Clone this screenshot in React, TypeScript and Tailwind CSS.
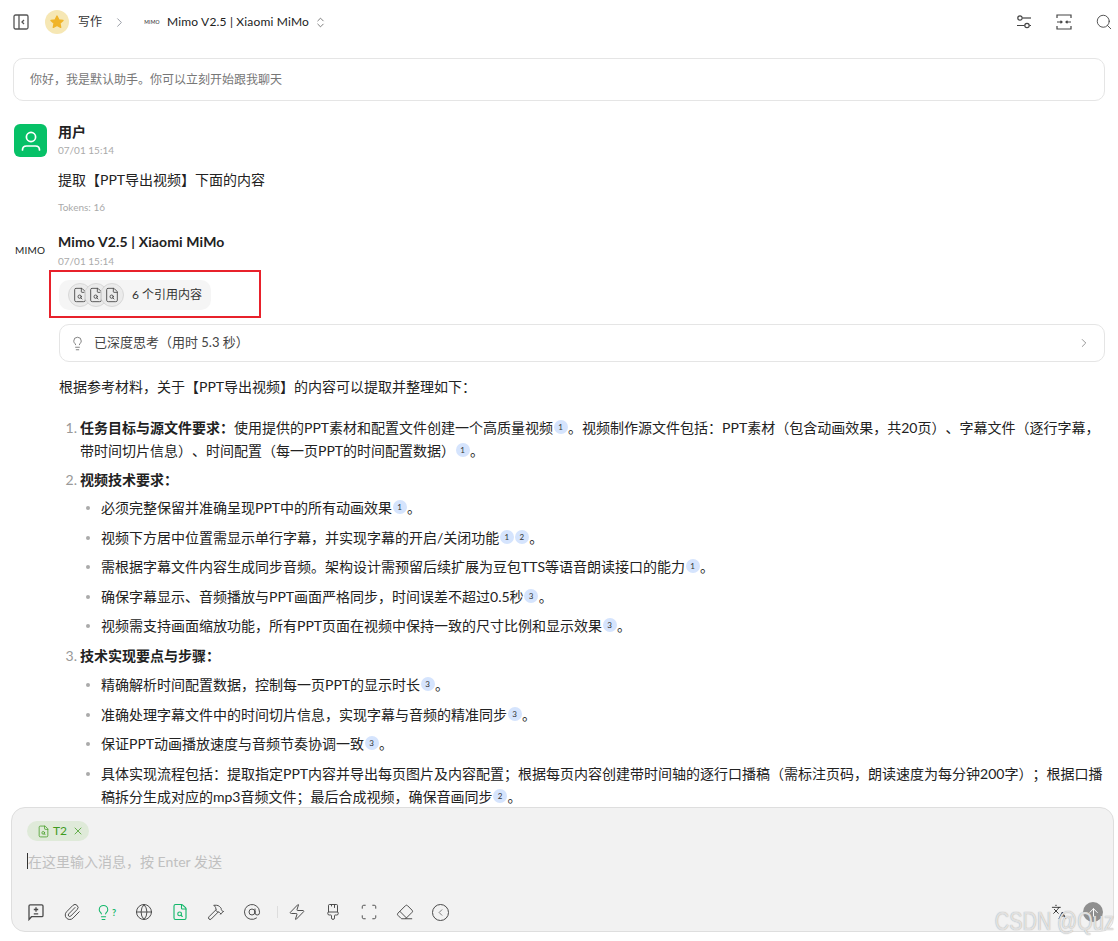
import React from "react";
import {
  ChevronRight, ChevronsUpDown, Search, Lightbulb, Paperclip, Globe, FileSearch, Hammer, AtSign, Zap,
  PaintbrushVertical, Scan, Eraser, ChevronLeft, Languages, ArrowUp, X,
} from "lucide-react";

const font = { fontFamily: 'Lato, "Noto Sans CJK SC", sans-serif' };

function Cite({ n }: { n: number }) {
  return (
    <span className="inline-flex items-center justify-center w-[14px] h-[14px] rounded-full bg-[#d5e4fd] text-[8px] leading-none text-[#333] align-[3px] mx-[0.5px]">
      {n}
    </span>
  );
}

function Num({ n, children }: { n: number; children: React.ReactNode }) {
  return (
    <div className="flex">
      <span className="w-[21px] shrink-0 text-right pr-[3px] text-[#999]">{n}.</span>
      <div className="flex-1 min-w-0">{children}</div>
    </div>
  );
}

function Bullet({ children, first }: { children: React.ReactNode; first?: boolean }) {
  return (
    <div className={first ? "flex pl-[21px] mt-[5px]" : "flex pl-[21px] mt-[6.5px]"}>
      <span className="w-[21px] shrink-0 flex pt-[10px]">
        <span className="w-[4px] h-[4px] rounded-full bg-[#aaa] ml-[6px]" />
      </span>
      <div className="flex-1 min-w-0">{children}</div>
    </div>
  );
}

function Tool({ children }: { children: React.ReactNode }) {
  return <span className="w-[18px] h-[18px] flex items-center justify-center text-[#4a4a4a]">{children}</span>;
}

function DocBadge() {
  return (
    <span className="w-[24px] h-[24px] -mr-[8px] rounded-full bg-[#e8e8e8]/80 border border-[#d8d8d8] flex items-center justify-center text-[#444]">
      <FileSearch size={16} strokeWidth={1.3} />
    </span>
  );
}

export default function App() {
  return (
    <div className="relative w-[1118px] h-[941px] overflow-hidden bg-white flex flex-col text-[#222] [text-spacing-trim:space-all]" style={font}>
      <header className="h-[44px] shrink-0 flex items-center pl-[13px] pr-[5px]">
        <svg width="16" height="16" viewBox="0 0 16 16" fill="none" stroke="#555" strokeWidth="1.3">
          <rect x="1" y="1" width="14" height="14" rx="1.5" />
          <path d="M6 1v14" />
          <path d="M11 6l-2 2 2 2" />
        </svg>
        <span className="ml-[16px] w-[24px] h-[24px] rounded-full bg-[#f6e7b4] flex items-center justify-center">
          <svg width="16" height="16" viewBox="0 0 24 24" fill="#f0b429" stroke="#f0b429" strokeWidth="2" strokeLinejoin="round">
            <path d="M12 3l2.7 5.8 6.3.8-4.6 4.3 1.2 6.2L12 17l-5.6 3.1 1.2-6.2L3 9.6l6.3-.8z" />
          </svg>
        </span>
        <span className="ml-[9px] text-[12px] text-[#333] leading-none">写作</span>
        <ChevronRight size={15} strokeWidth={1.4} className="ml-[10px] text-[#8a8f99]" />
        <span className="ml-[17px] w-[16px] text-[5px] leading-none tracking-[0.2px] text-[#222] text-center">MIMO</span>
        <span className="ml-[7px] text-[12px] tracking-[0.17px] text-[#222] leading-none">Mimo V2.5 | Xiaomi MiMo</span>
        <ChevronsUpDown size={13} strokeWidth={1.4} className="ml-[5px] text-[#555]" />
        <div className="ml-auto flex items-center gap-[22px] text-[#444]">
          <svg width="18" height="18" viewBox="0 0 18 18" fill="none" stroke="#444" strokeWidth="1.2">
            <circle cx="5" cy="5" r="2.2" />
            <path d="M7.5 5H16" />
            <circle cx="12" cy="12.5" r="2.2" />
            <path d="M2 12.5h7.5M14.5 12.5H16" />
          </svg>
          <svg width="18" height="18" viewBox="0 0 18 18" fill="none" stroke="#444" strokeWidth="1.2">
            <path d="M2 5V2h14v3M2 13v3h14v-3" />
            <path d="M2 9h5M5.5 7.8 7 9l-1.5 1.2M16 9h-5M12.5 7.8 11 9l1.5 1.2" />
          </svg>
          <Search size={18} strokeWidth={1.2} />
        </div>
      </header>

      <main className="flex-1 min-h-0 overflow-hidden pl-[13px] pr-[13px]">
        <div className="mt-[14px] h-[43px] border border-[#e5e5e5] rounded-[10px] flex items-center px-[16px] text-[12px] text-[#777]">
          你好，我是默认助手。你可以立刻开始跟我聊天
        </div>

        <section className="mt-[23px] flex">
          <span className="w-[33px] h-[33px] ml-[1px] rounded-[6px] bg-[#06c167] flex items-center justify-center">
            <svg width="24" height="24" viewBox="0 0 24 24" fill="none" stroke="#fff" strokeWidth="1.7" strokeLinecap="round">
              <circle cx="12" cy="8" r="4.6" />
              <path d="M3.5 21c0-2.4 1.6-4 4-4h9c2.4 0 4 1.6 4 4" />
            </svg>
          </span>
          <div className="ml-[11px]">
            <div className="text-[14px] font-bold leading-[16px]">用户</div>
            <div className="text-[10px] text-[#aaa] leading-[12px] mt-[4px]">07/01 15:14</div>
            <div className="text-[14px] leading-[20px] mt-[14px]">提取【PPT导出视频】下面的内容</div>
            <div className="text-[10px] text-[#aaa] leading-[12px] mt-[11px]">Tokens: 16</div>
          </div>
        </section>

        <section className="mt-[20px] flex">
          <span className="w-[32px] h-[34px] ml-[1px] flex items-center justify-center text-[10px] tracking-[0.2px] text-[#222]">MIMO</span>
          <div className="ml-[13px] flex-1 min-w-0">
            <div className="-ml-[1px] text-[14px] font-bold tracking-[0.13px] leading-[18px]">Mimo V2.5 | Xiaomi MiMo</div>
            <div className="-ml-[1px] text-[10px] text-[#aaa] leading-[12px] mt-[4px]">07/01 15:14</div>
            <div className="mt-[13px] flex h-[30px] w-[152px] rounded-[10px] bg-[#f5f5f5] items-center pl-[9px]">
              <DocBadge />
              <DocBadge />
              <DocBadge />
              <span className="ml-[16px] text-[12px] text-[#333]">6 个引用内容</span>
            </div>
            <div className="mt-[14px] h-[38px] border border-[#e5e5e5] rounded-[10px] flex items-center pl-[10px] pr-[13px] text-[13px] text-[#444]">
              <Lightbulb size={15} strokeWidth={1.3} className="text-[#666]" />
              <span className="ml-[9px]">已深度思考（用时 5.3 秒）</span>
              <ChevronRight size={14} strokeWidth={1.3} className="ml-auto text-[#777]" />
            </div>
            <p className="mt-[15px] text-[14px] leading-[20px]">根据参考材料，关于【PPT导出视频】的内容可以提取并整理如下：</p>

            <div className="mt-[19px] text-[14px] leading-[23px]">
              <Num n={1}>
                <b>任务目标与源文件要求：</b>使用提供的PPT素材和配置文件创建一个高质量视频<Cite n={1} />。视频制作源文件包括：PPT素材（包含动画效果，共20页）、字幕文件（逐行字幕，带时间切片信息）、时间配置（每一页PPT的时间配置数据）<Cite n={1} />。
              </Num>
              <div className="mt-[6px]">
                <Num n={2}><b>视频技术要求：</b></Num>
              </div>
              <Bullet first>必须完整保留并准确呈现PPT中的所有动画效果<Cite n={1} />。</Bullet>
              <Bullet>视频下方居中位置需显示单行字幕，并实现字幕的开启/关闭功能<Cite n={1} /><Cite n={2} />。</Bullet>
              <Bullet>需根据字幕文件内容生成同步音频。架构设计需预留后续扩展为豆包TTS等语音朗读接口的能力<Cite n={1} />。</Bullet>
              <Bullet>确保字幕显示、音频播放与PPT画面严格同步，时间误差不超过0.5秒<Cite n={3} />。</Bullet>
              <Bullet>视频需支持画面缩放功能，所有PPT页面在视频中保持一致的尺寸比例和显示效果<Cite n={3} />。</Bullet>
              <div className="mt-[6.5px]">
                <Num n={3}><b>技术实现要点与步骤：</b></Num>
              </div>
              <Bullet>精确解析时间配置数据，控制每一页PPT的显示时长<Cite n={3} />。</Bullet>
              <Bullet>准确处理字幕文件中的时间切片信息，实现字幕与音频的精准同步<Cite n={3} />。</Bullet>
              <Bullet>保证PPT动画播放速度与音频节奏协调一致<Cite n={3} />。</Bullet>
              <Bullet>具体实现流程包括：提取指定PPT内容并导出每页图片及内容配置；根据每页内容创建带时间轴的逐行口播稿（需标注页码，朗读速度为每分钟200字）；根据口播稿拆分生成对应的mp3音频文件；最后合成视频，确保音画同步<Cite n={2} />。</Bullet>
            </div>
          </div>
        </section>
      </main>

      <footer className="shrink-0 ml-[11px] mr-[4px] mb-[9px] h-[125px] rounded-[14px] border border-[#dedede] bg-[#f2f2f2] flex flex-col px-[15px] pt-[13px] pb-[9px]">
        <span className="self-start h-[20px] pl-[10px] pr-[5px] rounded-full bg-[#dfead9] flex items-center text-[#3f9b1f] text-[12px] gap-[3px]">
          <FileSearch size={13} strokeWidth={1.4} />
          T2
          <X size={12} strokeWidth={1.5} className="ml-[2px]" />
        </span>
        <div className="mt-[10px] flex items-center h-[20px] text-[14px] text-[#c0c0c0]">
          <span className="w-px h-[16px] bg-[#333]" />
          在这里输入消息，按 Enter 发送
        </div>
        <div className="mt-auto flex items-center">
          <div className="flex items-center gap-[18px]">
            <svg width="18" height="18" viewBox="0 0 18 18" fill="none" stroke="#4a4a4a" strokeWidth="1.3">
              <path d="M2 16.5V3a1.2 1.2 0 0 1 1.2-1.2h11.6A1.2 1.2 0 0 1 16 3v9.5a1.2 1.2 0 0 1-1.2 1.2H4.5z" />
              <path d="M9 4.3v4.4M6.8 6.5h4.4M6.8 10.8h4.4" />
            </svg>
            <Tool><Paperclip size={18} strokeWidth={1.3} /></Tool>
            <span className="w-[18px] h-[18px] flex items-center text-[#12b76a]">
              <Lightbulb size={17} strokeWidth={1.5} className="-ml-[4px] shrink-0" />
              <span className="text-[9px] leading-none font-bold">?</span>
            </span>
            <Tool><Globe size={18} strokeWidth={1.3} /></Tool>
            <span className="w-[18px] h-[18px] flex items-center justify-center text-[#12b76a]"><FileSearch size={18} strokeWidth={1.5} /></span>
            <Tool><Hammer size={18} strokeWidth={1.3} /></Tool>
            <Tool><AtSign size={18} strokeWidth={1.3} /></Tool>
          </div>
          <span className="ml-[16px] mr-[10px] w-px h-[12px] bg-[#ddd]" />
          <div className="flex items-center gap-[18px]">
            <Tool><Zap size={18} strokeWidth={1.3} /></Tool>
            <Tool><PaintbrushVertical size={18} strokeWidth={1.3} /></Tool>
            <Tool><Scan size={18} strokeWidth={1.3} /></Tool>
            <Tool><Eraser size={18} strokeWidth={1.3} /></Tool>
            <span className="w-[17px] h-[17px] rounded-full border-[1.3px] border-[#4a4a4a] flex items-center justify-center text-[#4a4a4a]">
              <ChevronLeft size={11} strokeWidth={1.5} />
            </span>
          </div>
          <div className="ml-auto flex items-center gap-[16px] -mr-[5px]">
            <Languages size={16} strokeWidth={1.3} className="text-[#222]" />
            <span className="w-[20px] h-[20px] rounded-full bg-[#8f8f8f] flex items-center justify-center text-white">
              <ArrowUp size={13} strokeWidth={1.8} />
            </span>
          </div>
        </div>
      </footer>

      <div className="absolute left-[49px] top-[270px] w-[212px] h-[48px] border-2 border-[#e8212b] pointer-events-none" />
      <div
        className="absolute right-[4px] top-[908px] text-[20px] leading-[26px] scale-y-125 text-[#f2f2f2]/80 [text-shadow:0_0_1px_#999] pointer-events-none"
        style={{ fontFamily: '"Liberation Sans", sans-serif' }}
      >
        CSDN @Quz
      </div>
    </div>
  );
}
